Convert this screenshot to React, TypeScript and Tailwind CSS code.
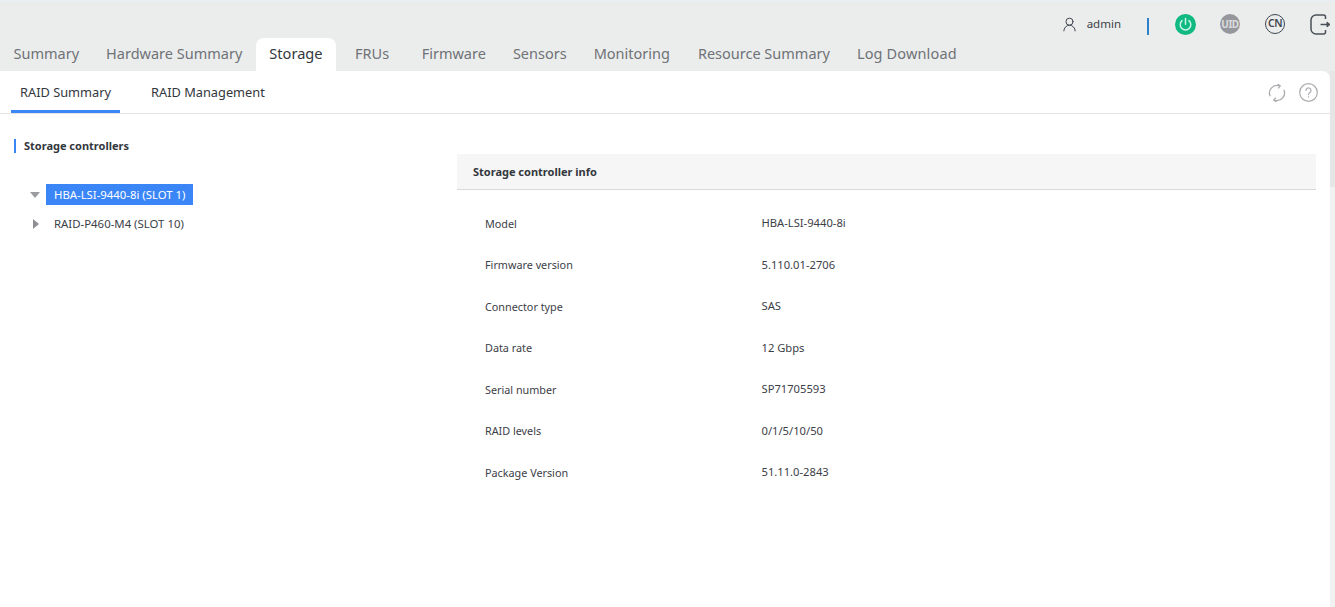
import { UserRound } from "lucide-react";

const tabs = ["Summary", "Hardware Summary", "Storage", "FRUs", "Firmware", "Sensors", "Monitoring", "Resource Summary", "Log Download"];

const info = [
  ["Model", "HBA-LSI-9440-8i"],
  ["Firmware version", "5.110.01-2706"],
  ["Connector type", "SAS"],
  ["Data rate", "12 Gbps"],
  ["Serial number", "SP71705593"],
  ["RAID levels", "0/1/5/10/50"],
  ["Package Version", "51.11.0-2843"],
];

function tabClass(t: string) {
  if (t === "Storage") return "rounded-t-[8px] bg-white px-[13.5px] pt-[3px] text-[14.6px] leading-[24px] text-[#33373d]";
  if (t === "FRUs") return "px-[19px] pt-[3px] text-[14.5px] leading-[24px] text-[#6f7276]";
  if (t === "Monitoring") return "pl-[13.5px] pr-[14.5px] pt-[3px] text-[14.5px] leading-[24px] text-[#6f7276]";
  if (t === "Log Download") return "px-[13.5px] pt-[3px] text-[14.5px] leading-[24px] tracking-[0.15px] text-[#6f7276]";
  return "px-[13.5px] pt-[3px] text-[14.5px] leading-[24px] text-[#6f7276]";
}

function PowerIcon() {
  return (
    <svg width="21" height="21" viewBox="0 0 21 21" fill="none">
      <circle cx="10.5" cy="10.5" r="10.5" fill="#10b981" />
      <path d="M7 6.6a5.3 5.3 0 1 0 7 0" stroke="#c9f5e4" strokeWidth="1.5" strokeLinecap="round" />
      <path d="M10.5 4.6v5.6" stroke="#c9f5e4" strokeWidth="1.5" strokeLinecap="round" />
    </svg>
  );
}

function LogoutIcon() {
  return (
    <svg width="21" height="21" viewBox="0 0 21 21" fill="none" stroke="#4b5058" strokeWidth="1.5">
      <path d="M15.5 5V3a2 2 0 0 0-2-2H6a5 5 0 0 0-5 5v9a5 5 0 0 0 5 5h7.5a2 2 0 0 0 2-2v-2" />
      <path d="M10.5 10.5h7" />
      <path d="M17 8l3 2.5-3 2.5z" fill="#4b5058" strokeWidth="1" />
    </svg>
  );
}

function RefreshIcon() {
  return (
    <svg width="18" height="18" viewBox="0 0 18 18" fill="none" stroke="#a9abae" strokeWidth="1.3">
      <path d="M2.2 12.2A7.6 7.6 0 0 1 11.2 1.7" />
      <path d="M15.8 5.8a7.6 7.6 0 0 1-9 10.5" />
      <path d="M9.6 0.2l2.6 1.7-2 2.4" />
      <path d="M8.4 17.8l-2.6-1.7 2-2.4" />
    </svg>
  );
}

function HelpIcon() {
  return (
    <svg width="19" height="19" viewBox="0 0 19 19" fill="none" stroke="#a9abae" strokeWidth="1.2">
      <circle cx="9.5" cy="9.5" r="8.8" />
      <path d="M7 7.4a2.5 2.5 0 1 1 3.9 2.1c-.9.6-1.4 1-1.4 2.1" strokeLinecap="round" />
      <path d="M9.5 13.3v1.2" />
    </svg>
  );
}

export default function App() {
  return (
    <div className="flex h-[607px] w-[1335px] flex-col overflow-hidden bg-[#ebeded] text-[12px] text-[#3c4047]" style={{ fontFamily: '"Noto Sans", "Open Sans", sans-serif' }}>
      <div className="flex h-[38px] items-start justify-end border-t border-[#e8eff6] pt-[13px]">
        <UserRound size={17} strokeWidth={1.4} className="mr-[9px] mt-[2px] text-[#3f4650]" />
        <span className="mt-[1px] text-[11.5px] leading-[17px]">admin</span>
        <div className="ml-[26px] mr-[26px] mt-[4px] h-[17px] w-[2px] bg-[#2b82c9]" />
        <PowerIcon />
        <div className="ml-[24px] flex h-[20px] w-[20px] items-center justify-center rounded-full bg-[#96979c] text-[10px] font-bold tracking-[-0.5px] text-[#dcdcde]">UID</div>
        <div className="ml-[25px] flex h-[20px] w-[20px] items-center justify-center rounded-full border-[1.5px] border-[#3f4650] text-[10.5px] font-semibold tracking-[-0.5px] text-[#3f4650]">CN</div>
        <div className="ml-[25px] mr-[4px]">
          <LogoutIcon />
        </div>
      </div>

      <div className="flex h-[33px]">
        {tabs.map((t) => (
          <div key={t} className={tabClass(t)}>
            {t}
          </div>
        ))}
      </div>

      <div className="flex flex-1">
        <div className="flex w-[1330px] flex-col rounded-tr-[8px] bg-white">
          <div className="flex h-[43px] items-stretch justify-between border-b border-[#e4e4e4] pr-[12px]">
            <div className="flex pl-[11px]">
              <div className="w-[109px] border-b-[3px] border-[#3b86f7] pl-[9px] pt-[10px] text-[12.8px] leading-[22px] text-[#33373d]">RAID Summary</div>
              <div className="ml-[31px] pt-[10px] text-[12.8px] leading-[22px] text-[#33373d]">RAID Management</div>
            </div>
            <div className="flex items-center gap-[13px] pt-px">
              <RefreshIcon />
              <HelpIcon />
            </div>
          </div>

          <div className="flex flex-1 pr-[14px]">
            <div className="w-[457px] shrink-0 pl-[14px] pt-[25px]">
              <div className="border-l-2 border-[#3b86f7] pl-[8px] text-[11px] font-bold leading-[14px] text-[#33373d]">Storage controllers</div>
              <div className="mt-[31px] pl-[16px]">
                <div className="flex h-[21px] items-center">
                  <svg width="10" height="6" viewBox="0 0 10 6">
                    <path d="M0 0h10L5 6z" fill="#9a9c9f" />
                  </svg>
                  <span className="ml-[6px] bg-[#3b86f7] px-[8px] text-[11.35px] leading-[21px] text-white">HBA-LSI-9440-8i (SLOT 1)</span>
                </div>
                <div className="mt-[8px] flex h-[21px] items-center">
                  <svg width="6" height="10" viewBox="0 0 6 10" className="ml-[3px]">
                    <path d="M0 0l6 5-6 5z" fill="#8e9093" />
                  </svg>
                  <span className="ml-[15px] text-[11.4px] leading-[21px]">RAID-P460-M4 (SLOT 10)</span>
                </div>
              </div>
            </div>

            <div className="flex-1 pt-[40px]">
              <div className="flex h-[36px] items-center border-b border-[#d9d9d9] bg-[#f6f6f6] pl-[16px] pt-px text-[11px] font-bold text-[#33373d]">Storage controller info</div>
              <div className="pt-[13px]">
                {info.map(([k, v]) => (
                  <div key={k} className="flex h-[41.5px] items-center pl-[28px]">
                    <div className="w-[276.5px] text-[10.8px]">{k}</div>
                    <div className="text-[11.2px]">{v}</div>
                  </div>
                ))}
              </div>
            </div>
          </div>
        </div>
        <div className="flex flex-1 flex-col bg-[#f1f1f1]">
          <div className="h-[116px] bg-[#e6e6e6]" />
        </div>
      </div>
    </div>
  );
}
